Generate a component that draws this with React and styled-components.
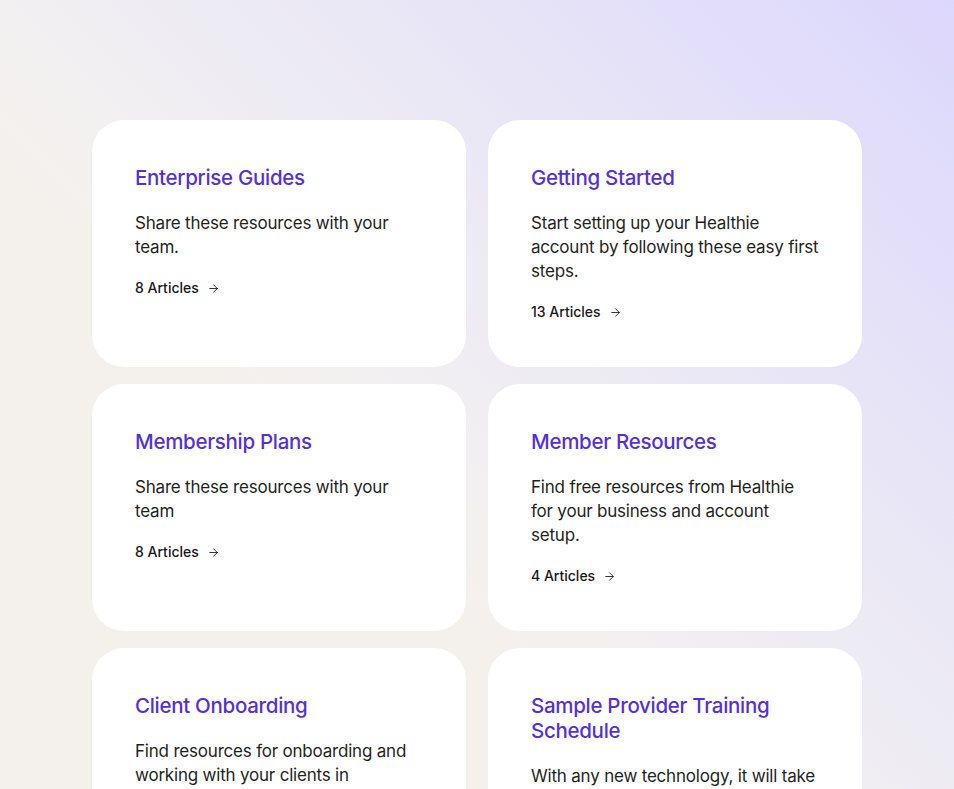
import React from "react";
import styled, { createGlobalStyle } from "styled-components";
import { ArrowRight } from "lucide-react";

const GlobalStyle = createGlobalStyle`
  html, body {
    margin: 0;
    padding: 0;
  }
  body {
    font-family: Inter, "Noto Sans", sans-serif;
    background: #f4f1ed;
  }
`;

const Page = styled.main`
  height: 789px;
  overflow: hidden;
  background: linear-gradient(
    225deg,
    #dcd7fc 0%,
    #e2defa 14%,
    #e7e4f7 27%,
    #eeecf3 45%,
    #f1eff1 53%,
    #f4f1ed 63%,
    #f4f1ed 100%
  );
  padding: 120px 92px 0;
  box-sizing: border-box;
`;

const Grid = styled.ul`
  list-style: none;
  margin: 0;
  padding: 0;
  display: grid;
  grid-template-columns: 374px 374px;
  grid-auto-rows: 247px;
  column-gap: 22px;
  row-gap: 17px;
`;

const Card = styled.li`
  background: #ffffff;
  border-radius: 32px;
  padding: 45px 43px;
  box-sizing: border-box;
`;

const Title = styled.h2`
  margin: 0 0 21px;
  font-size: 20.5px;
  line-height: 25px;
  font-weight: 500;
  letter-spacing: -0.3px;
  color: #5531d4;
`;

const Description = styled.p`
  margin: 0 0 18px;
  font-size: 17px;
  line-height: 24px;
  font-weight: 400;
  letter-spacing: -0.2px;
  color: #1f1f22;
  max-width: 290px;
`;

const Link = styled.a`
  display: inline-flex;
  align-items: center;
  gap: 8px;
  font-size: 14px;
  line-height: 20px;
  font-weight: 500;
  color: #18181b;
  text-decoration: none;
`;

const cards = [
  { title: "Enterprise Guides", text: "Share these resources with your team.", count: 8 },
  { title: "Getting Started", text: "Start setting up your Healthie account by following these easy first steps.", count: 13 },
  { title: "Membership Plans", text: "Share these resources with your team", count: 8 },
  { title: "Member Resources", text: "Find free resources from Healthie for your business and account setup.", count: 4 },
  { title: "Client Onboarding", text: "Find resources for onboarding and working with your clients in Healthie's platform.", count: 6 },
  { title: "Sample Provider Training Schedule", text: "With any new technology, it will take time to learn and adapt.", count: 3 },
];

export default function App() {
  return (
    <>
      <GlobalStyle />
      <Page>
        <Grid>
          {cards.map((c) => (
            <Card key={c.title}>
              <Title>{c.title}</Title>
              <Description>{c.text}</Description>
              <Link href="#">
                {c.count} Articles
                <ArrowRight size={13} strokeWidth={1.6} />
              </Link>
            </Card>
          ))}
        </Grid>
      </Page>
    </>
  );
}
